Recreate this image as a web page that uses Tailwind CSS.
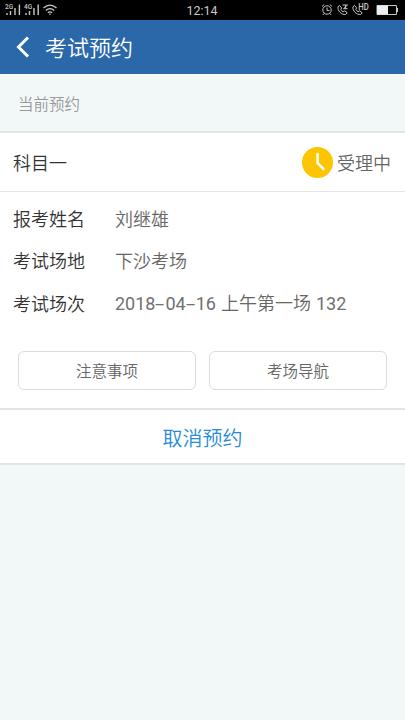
<!DOCTYPE html>
<html lang="zh-CN">
<head>
<meta charset="utf-8">
<meta name="viewport" content="width=device-width, initial-scale=1">
<title>考试预约</title>
<script src="https://cdn.jsdelivr.net/npm/@tailwindcss/browser@4"></script>
</head>
<body class="h-[720px] overflow-hidden bg-[#f2f8f8] font-['Noto_Sans_CJK_SC',sans-serif] font-[350] text-[#666]">
<div class="flex h-5 items-center bg-black text-[#c8c8c8]">
  <svg class="h-5 w-[62px]" viewBox="0 0 62 20" fill="none" stroke="currentColor">
    <g stroke-width="1.4"><path d="M7 15v-2M10.500 15v-4M15 15V8M19.400 15V4.500M26 15v-2M29.500 15v-4M34 15V8M38.200 15V4.500"/></g>
    <g fill="currentColor" stroke="none" font-family="Roboto, sans-serif" font-size="6.500" font-weight="500"><text x="5" y="9">2G</text><text x="24" y="9">4G</text></g>
    <g stroke-width="1.300"><path d="M43.500 8Q50 2.200 56.500 8M45.800 10.500Q50 6.800 54.200 10.500M47.900 12.800Q50 11 52.100 12.800"/></g>
    <circle cx="50" cy="14.300" r=".8" fill="currentColor" stroke="none"/>
  </svg>
  <div class="flex-1 pt-[2px] text-center font-['Roboto',sans-serif] text-[12.500px] font-normal leading-none"><span class="relative left-[12px]">12:14</span></div>
  <svg class="h-5 w-[87px]" viewBox="318 0 87 20" fill="none" stroke="currentColor" stroke-width="1">
    <circle cx="327" cy="10" r="4.200"/><path d="M327 7.500V10.500H329.500M322 6.500l2.200-2M332 6.500l-2.200-2M324 13.500l-1.200 1.500M330 13.500l1.200 1.500"/>
    <path d="M339.500 5.500l-1.500 1.200c-.8 4 3.500 8.300 7.700 7.800l1.500-1.700-2.500-2-1.600 1c-1-.5-2-1.500-2.300-2.500l.9-1.400z"/>
    <path d="M342.500 5h5l-4 3.700h4M345.500 5.200v3.600"/>
    <path d="M354.500 5.500l-1.500 1.200c-.8 4 3.500 8.300 7.700 7.800l1.500-1.700-2.500-2-1.600 1c-1-.5-2-1.500-2.300-2.500l.9-1.400z"/>
    <text x="358.300" y="10.300" fill="currentColor" stroke="none" font-family="Roboto, sans-serif" font-size="8.500" font-weight="500" textLength="10.500" lengthAdjust="spacingAndGlyphs">HD</text>
    <path d="M377 5.500h19.500v9H377zM397.500 8v4"/><path fill="#eee" stroke="none" d="M377 5.500h11v9h-11z"/>
  </svg>
</div>
<header class="flex h-[54px] items-center bg-[#2b68a9] pl-4 text-white">
  <svg class="mr-[14px] h-6 w-[15px]" viewBox="0 0 15 24" fill="none" stroke="white" stroke-width="3"><path d="M12 2.500 2.500 12 12 21.500"/></svg>
  <h1 class="pb-[2px] text-[22px] font-[350] leading-none">考试预约</h1>
</header>
<div class="h-[59px] border-b-2 border-[#e0e7e7] pl-[18px] pt-px text-[15.500px] leading-[57px] text-[#999]">当前预约</div>
<section class="bg-white">
  <div class="flex h-[59px] items-center border-b border-[#e2e6e6] pl-[13px] pr-[14px]">
    <span class="flex-1 pt-px text-[18px] text-[#333]">科目一</span>
    <svg class="mr-1 size-[31px]" viewBox="0 0 31 31"><circle cx="15.500" cy="15.500" r="15.500" fill="#fdc400"/><path d="M15.500 7v9l6 6" fill="none" stroke="white" stroke-width="2.500" stroke-linecap="round"/></svg>
    <span class="pt-px text-[18px]">受理中</span>
  </div>
  <dl class="grid grid-cols-[102px_1fr] auto-rows-[42.500px] items-center pl-[13px] pt-[5px] text-[18px]">
    <dt class="text-[#333]">报考姓名</dt><dd>刘继雄</dd>
    <dt class="text-[#333]">考试场地</dt><dd>下沙考场</dd>
    <dt class="text-[#333]">考试场次</dt><dd class="whitespace-nowrap"><span class="mr-[1px] font-['Roboto','Noto_Sans_CJK_SC',sans-serif] font-normal text-[#707070]"><span>2018</span><span class="inline-block w-[10px] origin-left scale-x-[1.850]">-</span><span>04</span><span class="inline-block w-[10px] origin-left scale-x-[1.850]">-</span><span>16</span></span> 上午第一场 <span class="ml-px font-['Roboto',sans-serif] font-normal text-[#707070]">132</span></dd>
  </dl>
  <div class="flex gap-[13px] px-[18px] pb-[18px] pt-[26.500px]">
    <button class="h-[39px] flex-1 rounded-md border border-[#dcdcdc] text-[15.500px]">注意事项</button>
    <button class="h-[39px] flex-1 rounded-md border border-[#dcdcdc] text-[15.500px]">考场导航</button>
  </div>
  <button class="block h-[57px] w-full border-y-2 border-[#e0e5e6] pt-[3px] text-[20px] text-[#288bd4]">取消预约</button>
</section>
</body>
</html>
